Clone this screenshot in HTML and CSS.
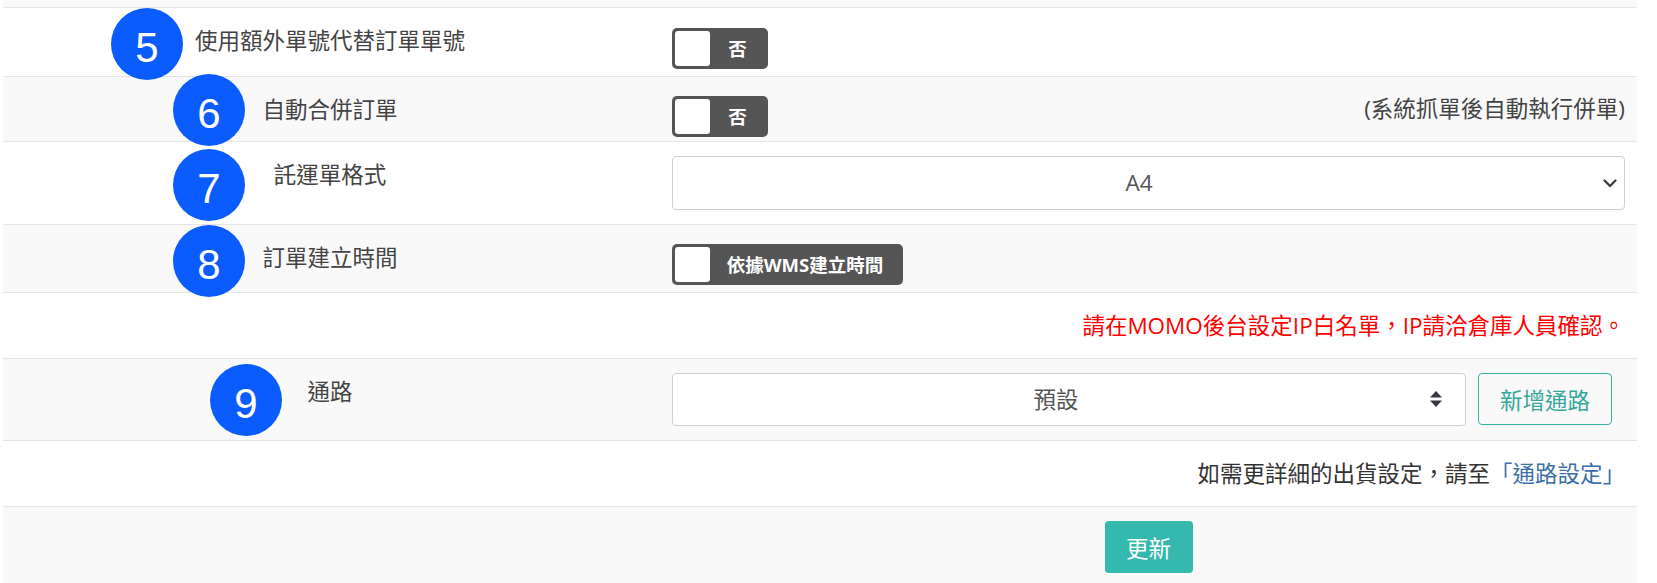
FILE: index.html
```html
<!DOCTYPE html>
<html lang="zh-Hant">
<head>
<meta charset="utf-8">
<title>設定</title>
<link rel="stylesheet" href="styles.css">
</head>
<body>
<div class="page">
  <div class="tbl">
    <div class="tr stripe top"></div>

    <div class="tr h-r5">
      <div class="lbl">使用額外單號代替訂單單號</div>
      <div class="ctl pt20">
        <div class="toggle t-sm"><span class="knob"></span><span class="tt">否</span></div>
      </div>
    </div>

    <div class="tr stripe h-r6">
      <div class="lbl">自動合併訂單</div>
      <div class="ctl pt19 split">
        <div class="toggle t-sm"><span class="knob"></span><span class="tt">否</span></div>
        <span class="hint">(系統抓單後自動執行併單)</span>
      </div>
    </div>

    <div class="tr h-r7">
      <div class="lbl">託運單格式</div>
      <div class="ctl pt14">
        <div class="select sel-a4">
          <span class="sel-text">A4</span>
          <svg class="chev" width="14" height="9" viewBox="0 0 14 9"><path d="M1.5 1.5 L7 7 L12.5 1.5" fill="none" stroke="#343a40" stroke-width="2.2" stroke-linecap="round" stroke-linejoin="round"/></svg>
        </div>
      </div>
    </div>

    <div class="tr stripe h-r8">
      <div class="lbl">訂單建立時間</div>
      <div class="ctl pt19">
        <div class="toggle t-lg"><span class="knob"></span><span class="tt">依據WMS建立時間</span></div>
      </div>
    </div>

    <div class="tr full h-msg">
      <div class="msg red">請在MOMO後台設定IP白名單，IP請洽倉庫人員確認。</div>
    </div>

    <div class="tr stripe h-r9">
      <div class="lbl">通路</div>
      <div class="ctl pt14 group">
        <div class="select sel-ch">
          <span class="sel-text">預設</span>
          <svg class="updown" width="14" height="18" viewBox="0 0 14 18"><path d="M7 1 L13 7.5 L1 7.5 Z" fill="#343a40"/><path d="M7 17 L13 10.5 L1 10.5 Z" fill="#343a40"/></svg>
        </div>
        <button class="btn-outline">新增通路</button>
      </div>
    </div>

    <div class="tr full h-info">
      <div class="msg dark">如需更詳細的出貨設定，請至<a class="link" href="#">「通路設定」</a></div>
    </div>

    <div class="tr stripe h-upd">
      <div></div>
      <div class="ctl pt14 center">
        <button class="btn-primary">更新</button>
      </div>
    </div>
  </div>

  <span class="badge b5">5</span>
  <span class="badge b6">6</span>
  <span class="badge b7">7</span>
  <span class="badge b8">8</span>
  <span class="badge b9">9</span>
</div>
</body>
</html>
```

FILE: styles.css
```css
* { box-sizing: border-box; }

html, body {
  margin: 0;
  padding: 0;
  background: #ffffff;
}

body {
  font-family: "Open Sans", "Noto Sans CJK TC", sans-serif;
  font-size: 22.5px;
  color: #444;
  overflow: hidden;
}

.page {
  position: relative;
  width: 1657px;
  height: 583px;
}

.tbl {
  margin-left: 3px;
  width: 1634px;
}

.tr {
  display: grid;
  grid-template-columns: 654px 1fr;
  border-top: 1px solid #e4e4e4;
  background: #ffffff;
}

.tr.stripe { background: #f9f9f9; }

.tr.top { height: 7px; border-top: none; }
.h-r5 { height: 69px; }
.h-r6 { height: 65px; }
.h-r7 { height: 83px; }
.h-r8 { height: 68px; }
.h-msg { height: 66px; }
.h-r9 { height: 82px; }
.h-info { height: 66px; }
.h-upd { height: 80px; }

.lbl {
  text-align: center;
  padding-top: 16px;
  line-height: 34px;
  color: #444;
}

.ctl {
  padding-left: 15px;
  padding-right: 12px;
}
.pt20 { padding-top: 20px; }
.pt19 { padding-top: 19px; }
.pt14 { padding-top: 14px; }

.split {
  display: flex;
  align-items: flex-start;
  justify-content: space-between;
}

.hint {
  line-height: 30px;
  margin-top: -2px;
  color: #444;
}

.toggle {
  display: flex;
  align-items: center;
  height: 41px;
  padding: 3px;
  background: #555555;
  border-radius: 5px;
}
.t-sm { width: 96px; }
.t-lg { width: 231px; }

.knob {
  width: 35px;
  height: 35px;
  background: #ffffff;
  border-radius: 3px;
  flex: none;
}

.tt {
  flex: 1;
  text-align: center;
  color: #ffffff;
  font-weight: 700;
  font-size: 18.5px;
  line-height: 22px;
}

.select {
  position: relative;
  display: flex;
  align-items: center;
  justify-content: center;
  background: #ffffff;
  border: 1px solid #cfcfcf;
  border-radius: 4px;
  color: #555;
}

.sel-a4 {
  height: 54px;
  width: 100%;
  padding-right: 19px;
}

.sel-ch {
  height: 53px;
  width: 794px;
  padding-right: 26px;
}

.sel-text { line-height: 30px; }

.chev {
  position: absolute;
  right: 7px;
  top: 22px;
}

.updown {
  position: absolute;
  right: 22px;
  top: 16px;
}

.group {
  display: flex;
  align-items: flex-start;
  gap: 12px;
}

.btn-outline {
  width: 134px;
  height: 52px;
  border: 1px solid #3bb0a5;
  border-radius: 4px;
  background: transparent;
  color: #36a79c;
  font-family: inherit;
  font-size: 22.5px;
  padding: 0;
}

.full {
  display: flex;
  align-items: center;
  justify-content: flex-end;
  padding-right: 12px;
}

.msg { line-height: 30px; }
.red { color: #ff0000; }
.dark { color: #333333; }

.link {
  color: #3a6fa8;
  text-decoration: none;
}

.center {
  display: flex;
  justify-content: center;
  align-items: flex-start;
}

.btn-primary {
  width: 88px;
  height: 52px;
  border: none;
  border-radius: 4px;
  background: #35b8ad;
  color: #ffffff;
  font-family: inherit;
  font-size: 22.5px;
  padding: 0;
}

.badge {
  position: absolute;
  width: 72px;
  height: 72px;
  border-radius: 50%;
  background: #0b5cff;
  color: #ffffff;
  font-family: "Liberation Sans", Arial, sans-serif;
  font-size: 42px;
  line-height: 1;
  display: flex;
  align-items: center;
  justify-content: center;
  padding-top: 7px;
}

.b5 { left: 111px; top: 8px; }
.b6 { left: 173px; top: 74px; }
.b7 { left: 173px; top: 149px; }
.b8 { left: 173px; top: 225px; }
.b9 { left: 210px; top: 364px; }
```
